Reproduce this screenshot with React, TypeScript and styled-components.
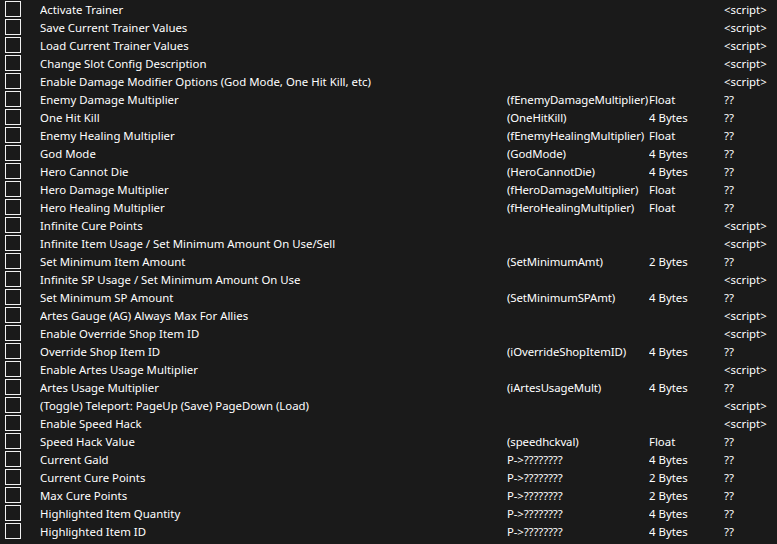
import styled, { createGlobalStyle } from 'styled-components';

const GlobalStyle = createGlobalStyle`
  html, body {
    margin: 0;
    padding: 0;
    background: #1a1a1a;
  }
`;

type Entry = {
  desc: string;
  address?: string;
  type?: string;
  value: string;
};

const entries: Entry[] = [
  { desc: 'Activate Trainer', value: '<script>' },
  { desc: 'Save Current Trainer Values', value: '<script>' },
  { desc: 'Load Current Trainer Values', value: '<script>' },
  { desc: 'Change Slot Config Description', value: '<script>' },
  { desc: 'Enable Damage Modifier Options (God Mode, One Hit Kill, etc)', value: '<script>' },
  { desc: 'Enemy Damage Multiplier', address: '(fEnemyDamageMultiplier)', type: 'Float', value: '??' },
  { desc: 'One Hit Kill', address: '(OneHitKill)', type: '4 Bytes', value: '??' },
  { desc: 'Enemy Healing Multiplier', address: '(fEnemyHealingMultiplier)', type: 'Float', value: '??' },
  { desc: 'God Mode', address: '(GodMode)', type: '4 Bytes', value: '??' },
  { desc: 'Hero Cannot Die', address: '(HeroCannotDie)', type: '4 Bytes', value: '??' },
  { desc: 'Hero Damage Multiplier', address: '(fHeroDamageMultiplier)', type: 'Float', value: '??' },
  { desc: 'Hero Healing Multiplier', address: '(fHeroHealingMultiplier)', type: 'Float', value: '??' },
  { desc: 'Infinite Cure Points', value: '<script>' },
  { desc: 'Infinite Item Usage / Set Minimum Amount On Use/Sell', value: '<script>' },
  { desc: 'Set Minimum Item Amount', address: '(SetMinimumAmt)', type: '2 Bytes', value: '??' },
  { desc: 'Infinite SP Usage / Set Minimum Amount On Use', value: '<script>' },
  { desc: 'Set Minimum SP Amount', address: '(SetMinimumSPAmt)', type: '4 Bytes', value: '??' },
  { desc: 'Artes Gauge (AG) Always Max For Allies', value: '<script>' },
  { desc: 'Enable Override Shop Item ID', value: '<script>' },
  { desc: 'Override Shop Item ID', address: '(iOverrideShopItemID)', type: '4 Bytes', value: '??' },
  { desc: 'Enable Artes Usage Multiplier', value: '<script>' },
  { desc: 'Artes Usage Multiplier', address: '(iArtesUsageMult)', type: '4 Bytes', value: '??' },
  { desc: '(Toggle) Teleport: PageUp (Save) PageDown (Load)', value: '<script>' },
  { desc: 'Enable Speed Hack', value: '<script>' },
  { desc: 'Speed Hack Value', address: '(speedhckval)', type: 'Float', value: '??' },
  { desc: 'Current Gald', address: 'P->????????', type: '4 Bytes', value: '??' },
  { desc: 'Current Cure Points', address: 'P->????????', type: '2 Bytes', value: '??' },
  { desc: 'Max Cure Points', address: 'P->????????', type: '2 Bytes', value: '??' },
  { desc: 'Highlighted Item Quantity', address: 'P->????????', type: '4 Bytes', value: '??' },
  { desc: 'Highlighted Item ID', address: 'P->????????', type: '4 Bytes', value: '??' },
];

export default function App() {
  return (
    <>
      <GlobalStyle />
      <Table>
        {entries.map((e) => (
          <Row key={e.desc}>
            <CheckCell>
              <Check />
            </CheckCell>
            <Cell>{e.desc}</Cell>
            <Cell $tight>{e.address ?? ''}</Cell>
            <Cell>{e.type ?? ''}</Cell>
            <Cell>{e.value}</Cell>
          </Row>
        ))}
      </Table>
    </>
  );
}

const Table = styled.div`
  width: 777px;
  height: 544px;
  background: #1a1a1a;
  overflow: hidden;
  font-family: 'Noto Sans', 'Open Sans', sans-serif;
  font-size: 11.4px;
  color: #ffffff;
`;

const Row = styled.div`
  display: grid;
  grid-template-columns: 40px 467px 142px 75px 1fr;
  height: 18px;
  align-items: center;
`;

const CheckCell = styled.div`
  display: flex;
  align-items: center;
  padding-left: 5px;
  height: 18px;
`;

const Check = styled.div`
  width: 14px;
  height: 14px;
  border: 1px solid #f0f0f0;
  box-sizing: content-box;
`;

const Cell = styled.div<{ $tight?: boolean }>`
  white-space: nowrap;
  overflow: hidden;
  line-height: 18px;
  padding-top: 1px;
  height: 18px;
  box-sizing: border-box;
  letter-spacing: ${(p) => (p.$tight ? '-0.1px' : 'normal')};
`;
